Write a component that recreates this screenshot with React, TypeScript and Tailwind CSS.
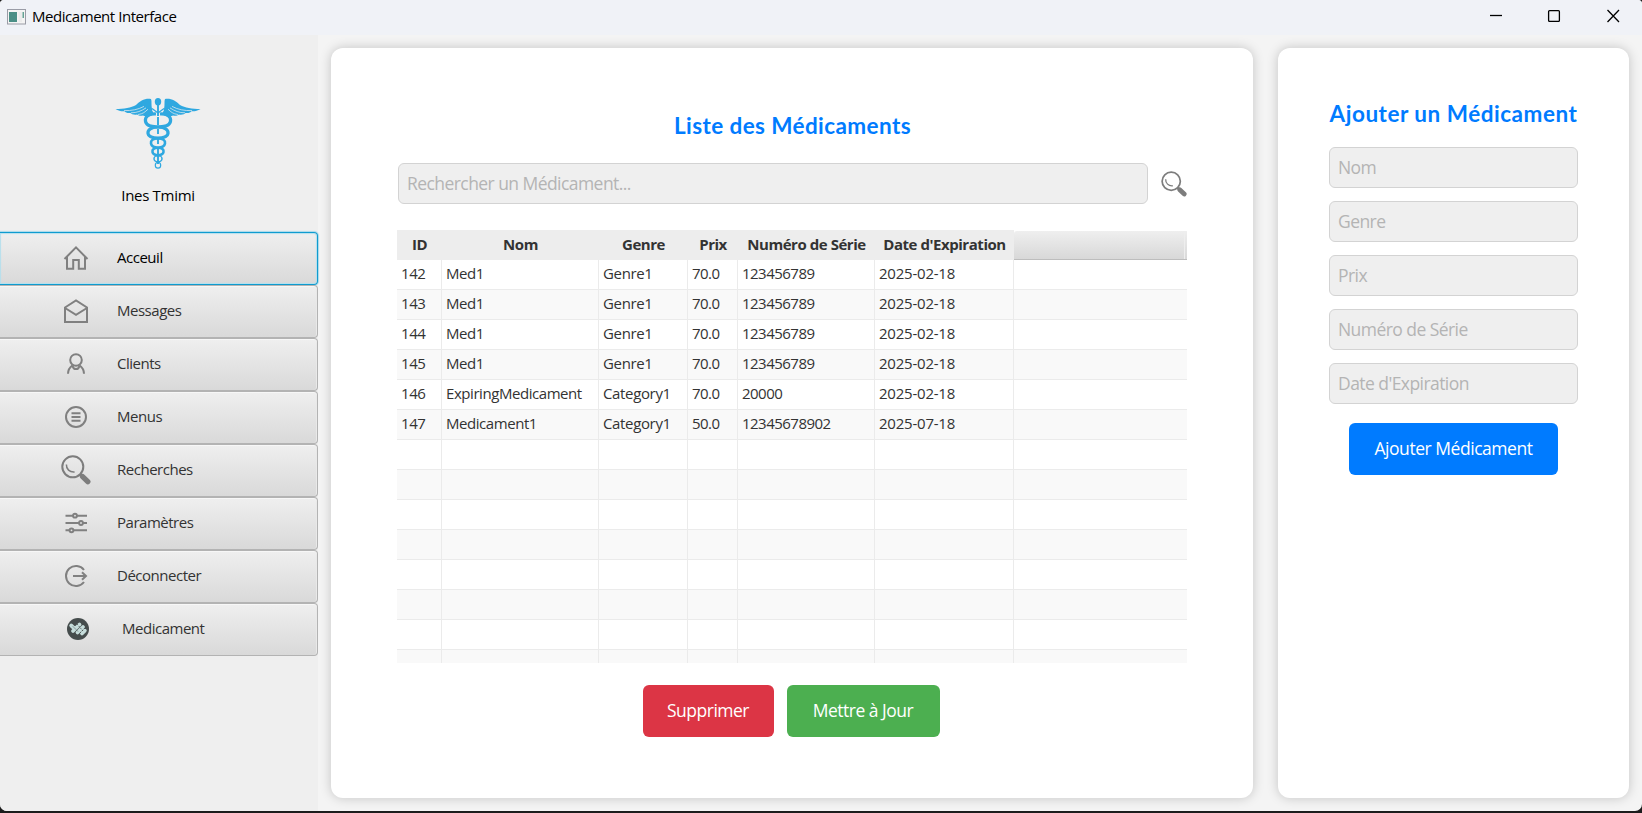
import type { ReactNode } from "react";

const rows = [
  ["142", "Med1", "Genre1", "70.0", "123456789", "2025-02-18"],
  ["143", "Med1", "Genre1", "70.0", "123456789", "2025-02-18"],
  ["144", "Med1", "Genre1", "70.0", "123456789", "2025-02-18"],
  ["145", "Med1", "Genre1", "70.0", "123456789", "2025-02-18"],
  ["146", "ExpiringMedicament", "Category1", "70.0", "20000", "2025-02-18"],
  ["147", "Medicament1", "Category1", "50.0", "12345678902", "2025-07-18"],
];

const headers = ["ID", "Nom", "Genre", "Prix", "Numéro de Série", "Date d'Expiration"];

const cellTracking = [
  "tracking-[-0.450px]",
  "tracking-[-0.440px]",
  "tracking-[-0.350px]",
  "tracking-[-0.560px]",
  "tracking-[-0.520px]",
  "tracking-[-0.220px]",
];

const gridCols = "grid grid-cols-[45px_157px_89px_50px_137px_139px_1fr]";

function Icon({ children }: { children: ReactNode }) {
  return (
    <svg width="32" height="32" viewBox="0 0 32 32" fill="none" stroke="#808080" strokeWidth="2">
      {children}
    </svg>
  );
}

function Magnifier({ size }: { size: number }) {
  return (
    <svg width={size} height={size} viewBox="0 0 30 30" fill="none" stroke="#7d7d7d">
      <circle cx="11.800" cy="11.800" r="10.500" strokeWidth="2" />
      <path d="M5.400 9.500c-.200 4.500 3.200 8 8.200 7.500" strokeWidth="1.500" />
      <path d="M19.200 19.200l2.200 2.200" strokeWidth="3" />
      <path d="M21.600 21.600l5.200 5" strokeWidth="5.400" strokeLinecap="round" />
    </svg>
  );
}

function Caduceus() {
  const wing = (
    <g>
      <path d="M37 11C36 7 37 3 36 1c-6-1-11 2-15 6-5 3-12 3.800-20.500 4 3 2 6 2.500 9 2.300 1 1.500 3 2 6 1.700 1 1.500 4 2 6.500 1.500 2 1.500 4 1.500 6 1 1.500 1 3 1 4.500.300 2 1.200 4 0 6-1.800z" fill="#2fa8e0" />
      <path d="M9 12.600c8 .200 14-1 20-4.200M16 14.800c6 0 10-1.700 15-4.900M23 16.500c5-.500 7-2.600 10-5.300" stroke="#efefef" strokeWidth=".7" fill="none" />
    </g>
  );
  return (
    <svg width="86" height="72" viewBox="0 0 86 72">
      {wing}
      <g transform="translate(86 0) scale(-1 1)">{wing}</g>
      <path d="M37.500 0h11v13h-11z" fill="#efefef" />
      <ellipse cx="43" cy="3.700" rx="3.200" ry="3.700" fill="#2fa8e0" />
      <path d="M43 6v60" stroke="#2fa8e0" strokeWidth="1.900" strokeDasharray="12 1 8 4 5 4 6 3 20" />
      <g fill="none" stroke="#2fa8e0">
        <path d="M37 10.500l6 4.500 6-4.500" strokeWidth="1.300" />
        <path d="M41 16c-7-.500-11.500 2.500-10.500 7.500 1.500 5.500 8 5 13 5.500 6 .500 10 2.500 9.500 6.500-.500 4-5 4.500-10 4.700" strokeWidth="3.200" />
        <path d="M45 16c7-.500 11.500 2.500 10.500 7.500-1.500 5.500-8 5-13 5.500-6 .500-10 2.500-9.500 6.500.500 4 5 4.500 10 4.700" strokeWidth="3.200" />
        <path d="M43 40.200c-5 .300-7.500 2-7 5.300.500 3 4 4 7 4.200 4 .300 6 1.800 5.500 4.300-.500 2.500-3 3.200-5.500 3.400" strokeWidth="2.600" />
        <path d="M43 40.200c5 .300 7.500 2 7 5.300-.500 3-4 4-7 4.200-4 .300-6 1.800-5.500 4.300.500 2.500 3 3.200 5.500 3.400" strokeWidth="2.600" />
        <ellipse cx="43" cy="60.700" rx="4" ry="3.100" strokeWidth="1.500" />
        <ellipse cx="43" cy="67.200" rx="2.700" ry="2.900" strokeWidth="1.200" />
      </g>
    </svg>
  );
}

const nav = [
  { label: "Acceuil", icon: <Icon><path d="M4.500 17L16 5.400 27.500 17M7 15v11.800h6.200V18h5.600v8.800H25V15" /></Icon> },
  { label: "Messages", icon: <Icon><path d="M5 12.500L16 5.400l11 7.100v14.500H5zM5 13l11 6.900L27 13" /></Icon> },
  {
    label: "Clients",
    icon: <Icon><circle cx="16" cy="12" r="5.800" /><path d="M8 25.700c0-4 1.800-6.500 4.600-8.500M24 25.700c0-4-1.800-6.500-4.600-8.500M12.500 17.700c.500 2.200 1.800 3.400 3.500 3.400s3-1.200 3.500-3.400" /></Icon>,
  },
  { label: "Menus", icon: <Icon><circle cx="16" cy="16" r="10" /><path d="M11.500 12.200h9M11.500 16h9M11.500 19.800h9" /></Icon> },
  { label: "Recherches", icon: <Magnifier size={30} /> },
  {
    label: "Paramètres",
    icon: (
      <Icon>
        <path d="M5.500 8.700h7.500M17 8.700h10M5.500 16h13.500M23 16h4M5.500 23.300h4M13.500 23.300H27" />
        <circle cx="15" cy="8.700" r="1.900" /><circle cx="21" cy="16" r="1.900" /><circle cx="11.500" cy="23.300" r="1.900" />
      </Icon>
    ),
  },
  { label: "Déconnecter", icon: <Icon><path d="M24 10a10 10 0 1 0 0 12M13 16h13M22 12.200l4 3.800-4 3.800" /></Icon> },
  {
    label: "Medicament",
    icon: (
      <svg width="22" height="22" viewBox="0 0 22 22">
        <circle cx="11" cy="11" r="11" fill="#454c4c" />
        <g stroke="#c5dcda" strokeLinecap="round" strokeWidth="3.800">
          <path d="M4.200 7.500l3.500 3.300M6 13l6.500-6.500M10.500 14.500L16 9M15 15.500l2.800-2.800" />
        </g>
        <path d="M6 8.500l5 5M10 6l6 7M13 15l5-5" stroke="#454c4c" strokeWidth=".8" strokeDasharray="1.500 1.200" />
      </svg>
    ),
  },
];

function Field({ text }: { text: string }) {
  return (
    <input
      placeholder={text}
      className="block h-[41px] w-full rounded-md border border-[#d3d3d3] bg-[#efefef] px-[8px] pb-[2px] text-[17.500px] tracking-[-0.560px] outline-none placeholder:text-[#b4b4b4]"
    />
  );
}

export default function App() {
  return (
    <div className="h-[813px] w-[1642px] overflow-hidden bg-[#1c1c1c] pb-[2px]">
      <div className="flex h-[811px] flex-col overflow-hidden rounded-t-[4px] rounded-b-[7px] bg-[#f4f4f4] font-['Open_Sans',sans-serif] text-[#333]">
        <header className="flex h-[35px] shrink-0 items-center bg-[#f0f2f7] pb-[2px] pl-[7px] text-black">
          <svg width="19" height="16" viewBox="0 0 19 16">
            <rect x=".500" y=".500" width="18" height="14.500" fill="#f4f4f4" stroke="#9a9ca6" />
            <rect x="2" y="3" width="8" height="10" fill="#4b8f86" />
            <rect x="11.500" y="3" width="3.500" height="10" fill="#ececec" />
            <rect x="15.500" y="3" width="1.500" height="6" fill="#65a294" />
          </svg>
          <span className="ml-1.5 text-[15px] tracking-[-0.450px]">Medicament Interface</span>
          <div className="ml-auto flex items-center pr-[22px] pb-px">
            <svg width="130" height="14" viewBox="0 0 130 14" fill="none" stroke="#000" strokeWidth="1.300">
              <path d="M0 6.500h12" />
              <rect x="58.600" y="1.600" width="10.800" height="10.800" rx="1" />
              <path d="M117.500 1l11.500 12M129 1l-11.500 12" />
            </svg>
          </div>
        </header>

        <div className="flex min-h-0 flex-1">
          <aside className="flex w-[318px] shrink-0 flex-col bg-[#efefef]">
            <div className="flex h-[197px] flex-col items-center pt-[63px] pr-[2px] text-black">
              <Caduceus />
              <span className="mt-[14px] text-[15px] tracking-[-0.300px]">Ines Tmimi</span>
            </div>
            <nav className="flex flex-col">
              {nav.map((item, i) => (
                <button
                  key={item.label}
                  className={
                    "flex h-[53px] items-center rounded-r-[4px] border-y border-r bg-linear-to-b from-[#efefef] to-[#d9d9d9] text-left text-[15px] tracking-[-0.480px] " +
                    (i === 0
                      ? "border-[#0f9bcf] text-black shadow-[0_0_1px_1px_#a8d9ea,inset_0_0_1px_1px_#b5dfed]"
                      : "border-[#b3b3b3] shadow-[inset_0_1px_0_#f7f7f7,inset_-1px_0_0_#e9e9e9]")
                  }
                >
                  <span className={i === 7 ? "flex w-[122px] justify-center pb-px pl-[34px]" : "flex w-[117px] justify-center pb-px pl-[34px]"}>
                    {item.icon}
                  </span>
                  <span className="pb-[2px]">{item.label}</span>
                </button>
              ))}
            </nav>
          </aside>

          <main className="flex flex-1 gap-[25px] p-[13px]">
            <section className="flex w-[922px] flex-col items-center rounded-xl bg-white px-[66px] shadow-[0_0_12px_rgba(0,0,0,0.200)]">
              <h1 className="mt-[60px] h-[36px] pl-px font-['Lato',sans-serif] text-[22.500px] leading-[36px] font-bold tracking-[0.400px] whitespace-nowrap text-[#007bff]">
                Liste des Médicaments
              </h1>
              <div className="mt-[19px] flex w-full items-center pl-px">
                <div className="w-[750px]"><Field text="Rechercher un Médicament..." /></div>
                <div className="ml-[13px]"><Magnifier size={26} /></div>
              </div>
              <div className="mt-[26px] h-[433px] w-full overflow-hidden text-[15px]">
                <div className={gridCols + " h-[30px] text-center leading-[29px] font-bold tracking-[-0.450px] whitespace-nowrap"}>
                  {headers.map((h) => (
                    <div key={h} className="bg-[#ededed]">{h}</div>
                  ))}
                  <div className="mt-px rounded-tl-[3px] border-b border-[#bdbdbd] bg-linear-to-b from-[#efefef] to-[#d8d8d8]">
                    <div className="ml-auto h-full w-[3px] border-l border-[#eee]" />
                  </div>
                </div>
                {Array.from({ length: 14 }, (_, r) => (
                  <div key={r} className={gridCols + " h-[30px] leading-[26px] " + (r % 2 ? "bg-[#f9f9f9]" : "bg-white")}>
                    {headers.map((h, c) => (
                      <div key={h} className={"border-r border-b border-[#ebebeb] pl-[4px] " + cellTracking[c]}>{rows[r]?.[c]}</div>
                    ))}
                    <div className="border-b border-[#ebebeb]" />
                  </div>
                ))}
              </div>
              <div className="mt-[22px] flex gap-[13px] pr-[2px] text-[17.500px] tracking-[-0.500px] text-white">
                <button className="h-[52px] w-[131px] rounded-md bg-[#dc3545] pb-[2px]">Supprimer</button>
                <button className="h-[52px] w-[153px] rounded-md bg-[#4caf50] pb-[2px]">Mettre à Jour</button>
              </div>
            </section>

            <section className="flex w-[351px] flex-col items-center rounded-xl bg-white px-[51px] shadow-[0_0_12px_rgba(0,0,0,0.200)]">
              <h2 className="mt-[48px] h-[36px] font-['Lato',sans-serif] text-[22.500px] leading-[36px] font-bold tracking-[0.520px] whitespace-nowrap text-[#007bff]">
                Ajouter un Médicament
              </h2>
              <div className="mt-[15px] flex w-[249px] flex-col gap-[13px]">
                {["Nom", "Genre", "Prix", "Numéro de Série", "Date d'Expiration"].map((t) => (
                  <Field key={t} text={t} />
                ))}
              </div>
              <button className="mt-[19px] h-[52px] w-[209px] rounded-md bg-[#007bff] pb-[2px] text-[17.500px] tracking-[-0.460px] text-white">
                Ajouter Médicament
              </button>
            </section>
          </main>
        </div>
      </div>
    </div>
  );
}
